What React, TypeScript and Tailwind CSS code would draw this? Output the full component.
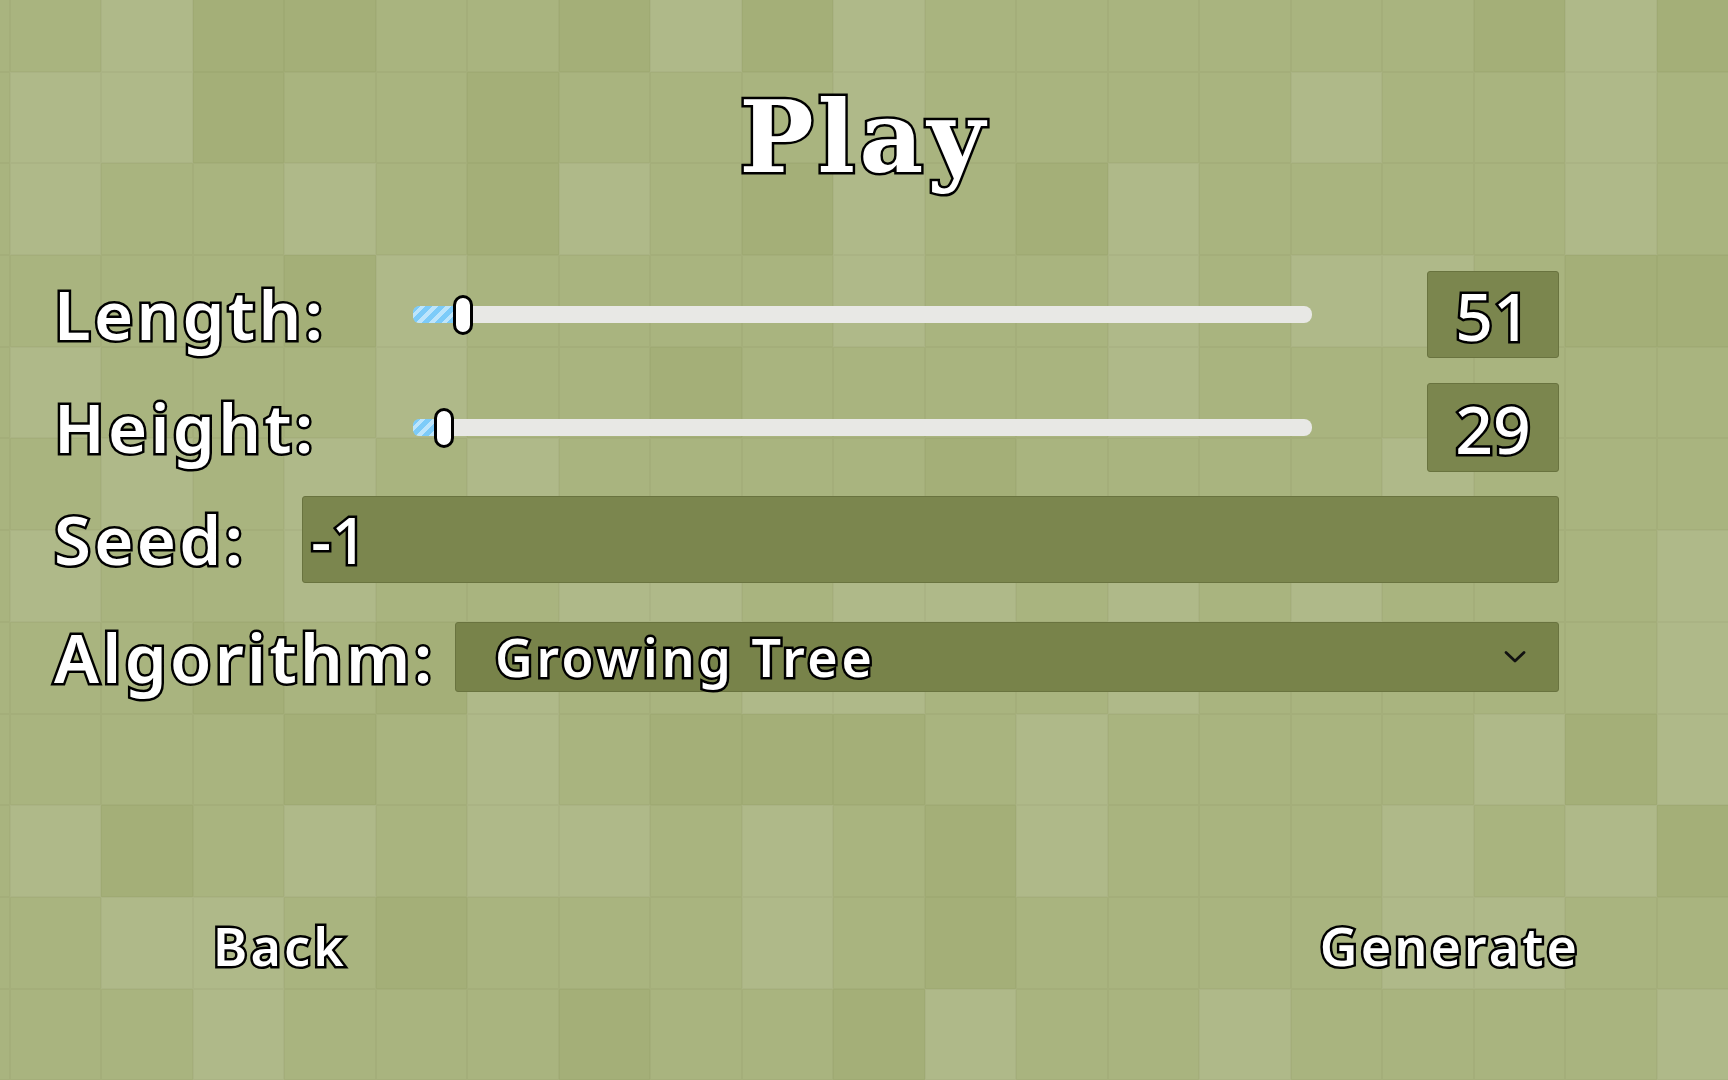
import React from 'react';

// tile shades of the background board, one string per row, one letter per column
const TILES = [
  'MMLDDMMDLDLMMMMMMDLD',
  'MLLDMMDMMMLMMMMLMMLM',
  'MLMMLMDLMDLMDLMMMMLM',
  'MMMMDLMMMMLMMLMLLMDD',
  'MLMMMLMMDMMMMLMMMMMM',
  'MMLMLMLMMMMDMMMMLMMM',
  'MLMMLMMLLMLLMLMLMMML',
  'MMMDMDLMMLLMMLMMMMML',
  'MMMMDMLMDDDMLMMMMLDL',
  'MLDMLMLLMLMDLMMMLMLD',
  'MMLLMDMMMLMDMMMMLLMM',
  'MMMLMMMDMMDLMMLMMMML',
  'MMMMMMMMMMMMMMMMMMMM',
];

const SHADE: Record<string, string> = {
  L: 'bg-[#afb989]',
  M: 'bg-[#a9b47f]',
  D: 'bg-[#a4af78]',
};

const sans = "font-['Noto_Sans',_'Open_Sans',_sans-serif]";
const outlined = 'text-white [paint-order:stroke_fill] [-webkit-text-stroke:5px_black]';

function Background() {
  return (
    <div
      aria-hidden="true"
      className="absolute left-[-82px] top-[-20px] grid grid-cols-[repeat(20,91.5px)] grid-rows-[repeat(13,91.7px)]"
    >
      {TILES.flatMap((row, r) =>
        row.split('').map((c, i) => (
          <div
            key={`${r}-${i}`}
            className={`${SHADE[c]} shadow-[inset_0_0_0_1px_rgba(70,80,30,0.05)]`}
          />
        )),
      )}
    </div>
  );
}

function Label({ text, width }: { text: string; width: string }) {
  return (
    <div className={`${width} shrink-0 pl-[3px] ${sans} ${outlined} text-[67px] font-semibold leading-none tracking-[0.05em]`}>
      {text}
    </div>
  );
}

function Slider({ pos }: { pos: number }) {
  return (
    <div className="relative h-[17px] w-[899px] shrink-0 rounded-[8px] bg-[#e8e8e5]">
      <div
        className="absolute inset-y-0 left-0 rounded-l-[6px] bg-[repeating-linear-gradient(135deg,#7ccbf9_0px,#7ccbf9_5px,#bde5fc_5px,#bde5fc_9px)]"
        style={{ width: pos }}
      />
      <div
        className="absolute top-1/2 h-[40px] w-[20px] -translate-x-1/2 -translate-y-1/2 rounded-full border-[3px] border-black bg-white"
        style={{ left: pos }}
      />
    </div>
  );
}

function NumberBox({ value }: { value: string }) {
  return (
    <div className="ml-auto flex h-full w-[132px] items-center justify-center rounded-[3px] border border-[#69733f] bg-[#7b864e]">
      <span className={`${sans} ${outlined} text-[66px] font-medium leading-none`}>{value}</span>
    </div>
  );
}

export default function App() {
  return (
    <div className="relative h-screen w-full overflow-hidden bg-[#a9b47f]">
      <Background />

      <div className="relative flex h-full flex-col">
        {/* Title */}
        <h1
          className={`pt-[88px] text-center font-['DejaVu_Serif',_serif] text-[99px] font-bold leading-none tracking-[0.04em] ${outlined}`}
        >
          Play
        </h1>

        {/* Settings */}
        <div className="mt-[84px] flex flex-col pl-[51px] pr-[169px]">
          <div className="flex h-[87px] items-center">
            <Label text="Length:" width="w-[362px]" />
            <Slider pos={50} />
            <NumberBox value="51" />
          </div>

          <div className="mt-[25px] flex h-[89px] items-center">
            <Label text="Height:" width="w-[362px]" />
            <Slider pos={31} />
            <NumberBox value="29" />
          </div>

          <div className="mt-[24px] flex h-[87px] items-center">
            <Label text="Seed:" width="w-[251px]" />
            <div className="flex h-full flex-1 items-center rounded-[3px] border border-[#69733f] bg-[#7b864e] pl-[8px]">
              <span className={`${sans} ${outlined} text-[63px] font-medium leading-none`}>-1</span>
            </div>
          </div>

          <div className="mt-[39px] flex h-[70px] items-center">
            <Label text="Algorithm:" width="w-[404px]" />
            <div className="flex h-full flex-1 items-center justify-between rounded-[3px] border border-[#69733f] bg-[#78834a] pl-[39px] pr-[32px]">
              <span className={`${sans} ${outlined} text-[52px] font-semibold leading-none tracking-[0.07em]`}>
                Growing Tree
              </span>
              <svg width="22" height="14" viewBox="0 0 22 14" fill="none" aria-hidden="true">
                <path d="M2 2.5 L11 11 L20 2.5" stroke="#111" strokeWidth="2.8" strokeLinecap="round" strokeLinejoin="round" />
              </svg>
            </div>
          </div>
        </div>

        {/* Actions */}
        <div className="mt-[219px] flex justify-between pl-[213px] pr-[148px]">
          <button className={`flex h-[70px] items-center ${sans} ${outlined} text-[52px] font-semibold leading-none tracking-[0.06em]`}>
            Back
          </button>
          <button className={`flex h-[70px] items-center ${sans} ${outlined} text-[52px] font-semibold leading-none tracking-[0.06em]`}>
            Generate
          </button>
        </div>
      </div>
    </div>
  );
}
